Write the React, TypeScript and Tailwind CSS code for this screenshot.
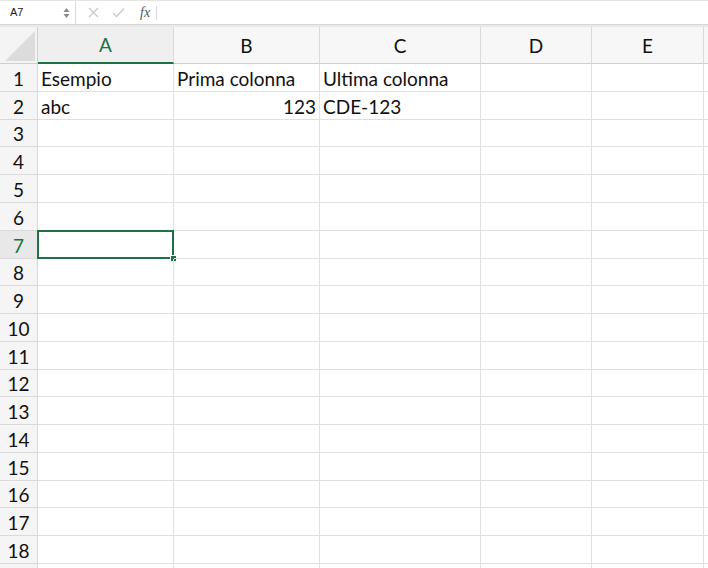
import React from "react";

const cols = [
  { key: "A", w: "w-[136px]" },
  { key: "B", w: "w-[146px]" },
  { key: "C", w: "w-[161px]" },
  { key: "D", w: "w-[111px]" },
  { key: "E", w: "w-[112px]" },
];

// row heights average ~27.8px, so a few rows are one pixel shorter
const rowH = [
  "h-[28px]", "h-[28px]", "h-[27px]", "h-[28px]", "h-[28px]", "h-[28px]",
  "h-[28px]", "h-[27px]", "h-[28px]", "h-[28px]", "h-[28px]", "h-[27px]",
  "h-[28px]", "h-[28px]", "h-[28px]", "h-[27px]", "h-[28px]", "h-[28px]",
  "h-[28px]",
];

const data: Record<string, { v: string; right?: boolean }> = {
  "A1": { v: "Esempio" },
  "B1": { v: "Prima colonna" },
  "C1": { v: "Ultima colonna" },
  "A2": { v: "abc" },
  "B2": { v: "123", right: true },
  "C2": { v: "CDE-123" },
};

const activeRow = 7;
const activeCol = "A";

function FormulaBar() {
  return (
    <div className="flex h-[25px] items-center border-b border-[#d6d6d6] border-t border-t-[#e4e4e4] bg-white text-[11px] text-[#222]">
      <div className="flex h-full w-[76px] items-center justify-between border-r border-[#dcdcdc] pl-[10px] pr-[5px]">
        <span className="font-['Liberation_Sans',sans-serif]">A7</span>
        <svg width="7" height="12" viewBox="0 0 7 12">
          <path d="M3.5 1 L6.5 5 L0.5 5 Z" fill="#8a8a8a" />
          <path d="M3.5 11 L6.5 7 L0.5 7 Z" fill="#8a8a8a" />
        </svg>
      </div>
      <div className="flex items-center gap-[13px] pl-[12px]">
        <svg width="11" height="11" viewBox="0 0 11 11">
          <path d="M1 1 L10 10 M10 1 L1 10" stroke="#c9c9c9" strokeWidth="1.3" />
        </svg>
        <svg width="13" height="11" viewBox="0 0 13 11">
          <path d="M1 6 L4.5 9.5 L12 1.5" stroke="#c9c9c9" strokeWidth="1.3" fill="none" />
        </svg>
        <span className="ml-[2px] font-['Liberation_Serif',serif] text-[14px] italic text-[#555]">fx</span>
      </div>
      <div className="ml-[6px] h-[14px] border-l border-[#d9d9d9]" />
    </div>
  );
}

function HeaderRow() {
  return (
    <div className="flex h-[37px]">
      <div className="relative w-[38px] shrink-0 border-b border-r border-[#cfcfcf] bg-[#f4f4f4]">
        <svg className="absolute bottom-[2px] right-[2px]" width="30" height="30" viewBox="0 0 30 30">
          <path d="M30 0 L30 30 L0 30 Z" fill="#dcdcdc" />
        </svg>
      </div>
      {cols.map((c) => (
        <div
          key={c.key}
          className={`${c.w} flex shrink-0 items-center justify-center border-r border-[#dadada] pt-[2px] text-[19px] ${
            c.key === activeCol
              ? "border-b-2 border-b-[#1e7145] bg-[#efefef] text-[#1e7145]"
              : "border-b border-b-[#cfcfcf] bg-[#f7f7f7] text-[#111]"
          }`}
        >
          {c.key}
        </div>
      ))}
      <div className="flex-1 border-b border-[#cfcfcf] bg-[#f7f7f7]" />
    </div>
  );
}

export default function App() {
  return (
    <div className="h-[568px] w-[708px] overflow-hidden bg-white font-['Lato','Liberation_Sans',sans-serif]">
      <FormulaBar />
      <div className="h-[2px] bg-[#e9e9e9]" />
      <HeaderRow />
      {rowH.map((h, i) => {
        const r = i + 1;
        const isActive = r === activeRow;
        return (
          <div key={r} className={`flex ${h}`}>
            <div
              className={`flex w-[38px] shrink-0 items-center justify-center border-b border-r border-[#dadada] pt-[3px] text-[19px] ${
                isActive ? "bg-[#e8e8e8] text-[#1e7145]" : "bg-[#f5f5f5] text-[#111]"
              }`}
            >
              {r < 19 ? r : ""}
            </div>
            {cols.map((c) => {
              const cell = data[c.key + r];
              const sel = isActive && c.key === activeCol;
              return (
                <div
                  key={c.key}
                  className={`${c.w} relative flex shrink-0 items-center border-b border-r border-[#e0e0e0] px-[3px] pt-[3px] text-[19px] text-[#111] ${
                    cell?.right ? "justify-end" : "justify-start"
                  }`}
                >
                  {cell?.v}
                  {sel && (
                    <>
                      <div className="absolute -left-px -top-px bottom-[-1px] right-[-1px] border-2 border-[#1e7145]" />
                      <div className="absolute bottom-[-4px] right-[-4px] h-[7px] w-[7px] border border-white bg-[#1e7145]" />
                    </>
                  )}
                </div>
              );
            })}
            <div className="flex-1 border-b border-[#e0e0e0]" />
          </div>
        );
      })}
    </div>
  );
}
